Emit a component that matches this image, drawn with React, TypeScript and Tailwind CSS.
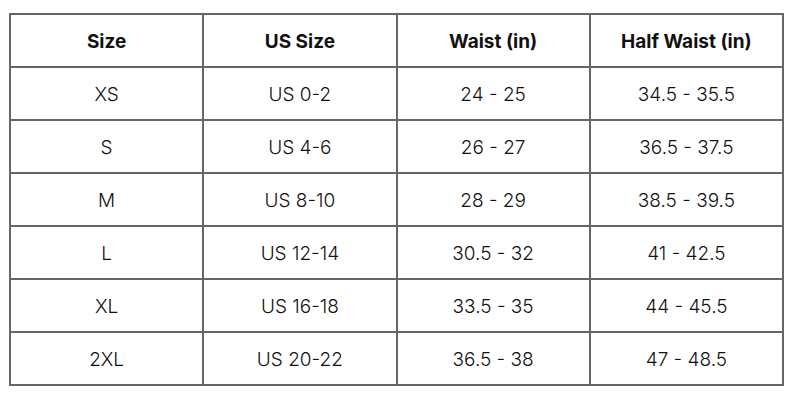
import React from 'react';

const rows = [
  ['XS', 'US 0-2', '24 - 25', '34.5 - 35.5'],
  ['S', 'US 4-6', '26 - 27', '36.5 - 37.5'],
  ['M', 'US 8-10', '28 - 29', '38.5 - 39.5'],
  ['L', 'US 12-14', '30.5 - 32', '41 - 42.5'],
  ['XL', 'US 16-18', '33.5 - 35', '44 - 45.5'],
  ['2XL', 'US 20-22', '36.5 - 38', '47 - 48.5'],
];

const headers = ['Size', 'US Size', 'Waist (in)', 'Half Waist (in)'];

const App: React.FC = () => {
  return (
    <div className="w-[800px] h-[400px] bg-white pt-[13px] pl-[9px]" style={{ fontFamily: 'Inter, "Liberation Sans", sans-serif' }}>
      <table className="w-[775px] table-fixed border-collapse text-[#111]">
        <thead>
          <tr className="h-[53px]">
            {headers.map(h => (
              <th key={h} className="border-2 border-[#666] pt-[3px] text-[19px] font-bold text-center">
                {h}
              </th>
            ))}
          </tr>
        </thead>
        <tbody>
          {rows.map(row => (
            <tr key={row[0]} className="h-[53px]">
              {row.map((cell, i) => (
                <td key={i} className="border-2 border-[#666] pt-[3px] text-[19px] font-light text-center">
                  {cell}
                </td>
              ))}
            </tr>
          ))}
        </tbody>
      </table>
    </div>
  );
};

export default App;
